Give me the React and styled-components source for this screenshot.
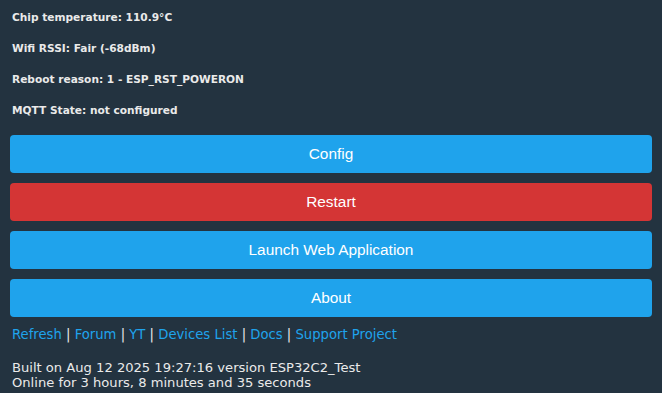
import React from 'react';
import styled, { createGlobalStyle } from 'styled-components';

const GlobalStyle = createGlobalStyle`
  html, body {
    margin: 0;
    padding: 0;
    background: #233340;
  }
`;

const Page = styled.div`
  background: #233340;
  color: #eaeaea;
  min-height: 393px;
  padding: 0 10px;
  box-sizing: border-box;
  font-family: 'DejaVu Sans', Verdana, sans-serif;
`;

const Info = styled.div`
  display: flex;
  flex-direction: column;
  gap: 18px;
  padding: 11px 2px 0;
`;

const InfoLine = styled.div`
  font-size: 10.6px;
  font-weight: bold;
  line-height: 13px;
`;

const Buttons = styled.div`
  display: flex;
  flex-direction: column;
  gap: 10px;
  margin-top: 18px;
`;

const Button = styled.button`
  height: 38px;
  border: none;
  border-radius: 4px;
  background: ${(p) => (p.$danger ? '#d43535' : '#1fa3ec')};
  color: #fff;
  font-family: 'Liberation Sans', Arial, sans-serif;
  font-size: 15.4px;
  cursor: pointer;
`;

const Links = styled.div`
  margin-top: 10px;
  padding-left: 2px;
  font-size: 13.2px;
  line-height: 16px;
  color: #eaeaea;

  a {
    color: #1fa3ec;
    text-decoration: none;
  }
`;

const Footer = styled.div`
  margin-top: 17px;
  padding-left: 2px;
  font-size: 13.1px;
  line-height: 15px;
`;

const links = ['Refresh', 'Forum', 'YT', 'Devices List', 'Docs', 'Support Project'];

export default function App() {
  return (
    <Page>
      <GlobalStyle />
      <Info>
        <InfoLine>Chip temperature: 110.9°C</InfoLine>
        <InfoLine>Wifi RSSI: Fair (-68dBm)</InfoLine>
        <InfoLine>Reboot reason: 1 - ESP_RST_POWERON</InfoLine>
        <InfoLine>MQTT State: not configured</InfoLine>
      </Info>
      <Buttons>
        <Button>Config</Button>
        <Button $danger>Restart</Button>
        <Button>Launch Web Application</Button>
        <Button>About</Button>
      </Buttons>
      <Links>
        {links.map((l, i) => (
          <React.Fragment key={l}>
            {i > 0 && ' | '}
            <a href="#">{l}</a>
          </React.Fragment>
        ))}
      </Links>
      <Footer>
        Built on Aug 12 2025 19:27:16 version ESP32C2_Test
        <br />
        Online for 3 hours, 8 minutes and 35 seconds
      </Footer>
    </Page>
  );
}
